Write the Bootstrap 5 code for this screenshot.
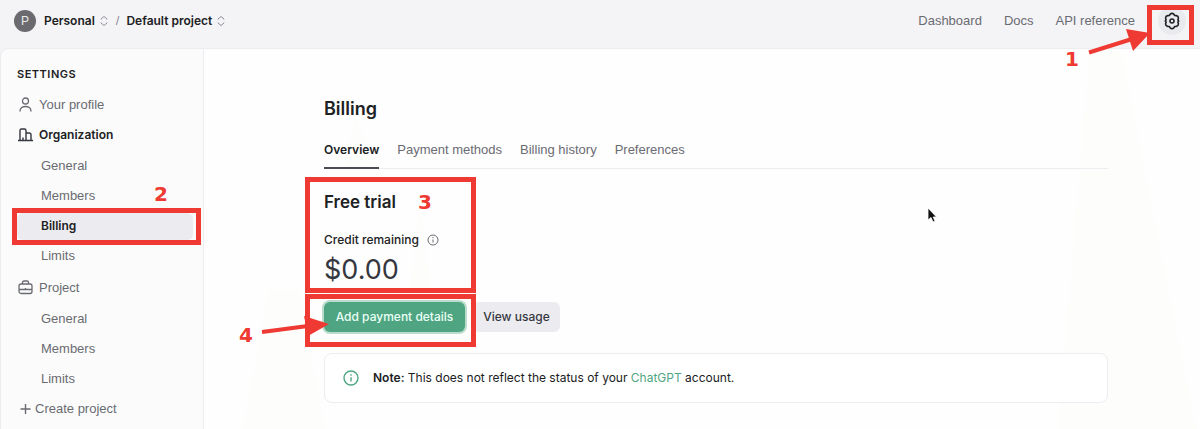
<!DOCTYPE html>
<html lang="en">
<head>
<meta charset="utf-8">
<meta name="viewport" content="width=device-width, initial-scale=1">
<title>Billing</title>
<link href="https://cdn.jsdelivr.net/npm/bootstrap@5.3.0/dist/css/bootstrap.min.css" rel="stylesheet">
<style>
:root { --ink:#202123; --muted:#6a6b72; --line:#ececf1; --mark-red:#ee3a32; --green:#4fa582; }
body { font:13px/20px "Liberation Sans", Arial, sans-serif; color:var(--ink); background:#f4f4f6; overflow-x:hidden; }
a { text-decoration:none; }
.strong-text { font-family:Inter, "Liberation Sans", sans-serif; font-size:12px; font-weight:600; }
.topbar { height:48px; padding:0 14px 6px; }
.avatar { width:22px; height:22px; background:#6b6b6f; color:#ececec; font-size:12px; }
.switcher { color:var(--ink); background:none; border:0; padding:0; }
.slash { margin:0 7px; color:#8e8ea0; }
.top-links { gap:22px; margin-right:23px; }
.top-links a, .side a, .tab-row a { color:var(--muted); }
.gear { width:28px; height:28px; border:0; padding:0; background:#e9eaee; }
.side { width:204px; flex:none; background:#fbfbfb; border:1px solid var(--line); border-bottom:0; border-radius:8px 0 0 0; padding:16px 10px 0 16px; }
.side h2 { font-size:11px; letter-spacing:.5px; line-height:18px; margin:0 0 7px; }
.side a { height:30px; }
.side ul { margin:1px 0 2px; }
.side ul:last-of-type { margin-bottom:0; }
.side ul a { padding-left:24px; }
.side .active { color:var(--ink); }
.side ul .active::before { content:""; position:absolute; inset:2px 0 1px; background:#ececf0; border-radius:6px; z-index:0; }
.panel { min-width:0; background:#fefefe; border-top:1px solid var(--line); padding:46px 92px 25px 120px; }
.panel h1 { font:600 18px/28px Inter, sans-serif; margin:0 0 16px; }
.tab-row { gap:18px; border-bottom:1px solid var(--line); }
.tab-row a { padding:1px 0 7px; margin-bottom:-1px; border-bottom:2px solid transparent; height:30px; }
.tab-row .active { color:var(--ink); border-color:#4a4b55; }
.trial h2 { font:600 17px/24px Inter, sans-serif; margin:0 0 16px; }
.trial { margin-top:21px; width:133px; }
.credit { font:500 12px/20px Inter, sans-serif; }
.amount { font:27px/34px Inter, sans-serif; color:#353740; margin-top:3px; }
.actions { margin-top:15px; }
.btn-pay, .btn-usage { font:500 12px/20px Inter, sans-serif; border:0; border-radius:6px; padding:5px 8px; height:30px; white-space:nowrap; }
.btn-pay { color:#eafff5; background:var(--green); box-shadow:0 0 0 2px #b9dccd; width:141px; }
.btn-usage { color:#353740; background:#ececf0; width:87px; }
.note { margin-top:21px; gap:14px; border:1px solid var(--line); border-radius:8px; padding:14px 18px; background:#fff; height:50px; }
.note-text { font:12px/20px Inter, sans-serif; }
.note a { color:var(--green); }
.outline { position:absolute; border:5px solid var(--mark-red); pointer-events:none; z-index:3; }
.step { position:absolute; font:700 20px/20px "DejaVu Sans", sans-serif; color:var(--mark-red); z-index:3; }
.overlay { position:absolute; overflow:visible; pointer-events:none; z-index:4; }
.shade { position:absolute; right:0; top:0; z-index:0; }
.o-gear { inset:-2px -8px -10px -11px; }
.o-nav { inset:-3px -8px -4px -5px; }
.o-trial { top:-13px; left:-19px; width:171px; height:116px; }
.o-pay { top:-8px; left:-19px; width:171px; height:53px; }
</style>
</head>
<body class="d-flex flex-column min-vh-100">
<header class="topbar d-flex align-items-center">
  <span class="avatar rounded-circle d-flex align-items-center justify-content-center me-2">P</span>
  <button class="switcher strong-text d-flex align-items-center gap-1" type="button">Personal
    <svg width="10" height="12" viewBox="0 0 10 12" fill="none" stroke="#8e8ea0"><path d="M2 4.500V4l3-2.500L8 4v.5M2 7.500V8l3 2.500L8 8v-.5"/></svg></button>
  <span class="slash">/</span>
  <button class="switcher strong-text d-flex align-items-center gap-1" type="button">Default project
    <svg width="10" height="12" viewBox="0 0 10 12" fill="none" stroke="#8e8ea0"><path d="M2 4.500V4l3-2.500L8 4v.5M2 7.500V8l3 2.500L8 8v-.5"/></svg></button>
  <nav class="top-links d-flex ms-auto"><a href="#">Dashboard</a><a href="#">Docs</a><a href="#">API reference</a></nav>
  <div class="position-relative">
    <button class="gear rounded-circle d-flex align-items-center justify-content-center" type="button" aria-label="Settings">
      <svg width="18" height="18" viewBox="0 0 18 18" fill="none" stroke="#202123" stroke-width="1.600" stroke-linejoin="round"><path d="M7.200 2.200Q9 .6 10.800 2.200L11.700 3.500 13.300 3.600Q15.600 4.100 15.400 6.300L14.900 7.800 15.700 9 14.900 10.200 15.400 11.700Q15.600 13.900 13.300 14.400L11.700 14.500 10.800 15.800Q9 17.400 7.200 15.800L6.300 14.500 4.700 14.400Q2.400 13.900 2.600 11.700L3.100 10.200 2.300 9 3.100 7.800 2.600 6.300Q2.400 4.100 4.700 3.600L6.300 3.500Z"/><circle cx="9" cy="9" r="2"/></svg></button>
    <span class="outline o-gear"></span>
    <span class="step" style="right:107px;top:42px">1</span>
    <svg class="overlay" style="right:36px;top:21px" width="62" height="30" viewBox="0 0 62 30"><path d="M1 24.500 44 11" stroke="#ee3a32" stroke-width="4"/><path d="M38 1 62 5 45 23Z" fill="#ee3a32"/></svg>
  </div>
</header>
<div class="d-flex flex-grow-1">
  <nav class="side" aria-label="Settings">
    <h2 class="strong-text">SETTINGS</h2>
    <a href="#" class="d-flex align-items-center gap-1"><svg width="18" height="18" viewBox="0 0 18 18" fill="none" stroke="#6a6b72" stroke-width="1.300" stroke-linecap="round"><circle cx="8.500" cy="5" r="3"/><path d="M3 15C3 9 14 9 14 15"/></svg>Your profile</a>
    <a href="#" class="active strong-text d-flex align-items-center gap-1"><svg width="18" height="18" viewBox="0 0 18 18" fill="none" stroke="#353740" stroke-width="1.400"><path d="M1 14.500H16M3 14.500V4.500Q3 3 4.500 3H7.500Q9 3 9 4.500V14.500M9 7H12Q14 7 14 9V14.500M6 14V11.500"/></svg>Organization</a>
    <ul class="list-unstyled">
      <li><a href="#" class="d-flex align-items-center">General</a></li>
      <li class="position-relative"><a href="#" class="d-flex align-items-center">Members</a><span class="step" style="right:25px;top:3px">2</span></li>
      <li class="position-relative"><a href="#" class="active strong-text d-flex align-items-center"><span class="position-relative z-1">Billing</span></a><span class="outline o-nav"></span></li>
      <li><a href="#" class="d-flex align-items-center">Limits</a></li>
    </ul>
    <a href="#" class="d-flex align-items-center gap-1"><svg width="18" height="18" viewBox="0 0 18 18" fill="none" stroke="#6a6b72" stroke-width="1.300"><rect x="2" y="5" width="13" height="9.500" rx="2"/><path d="M5.500 5V3.500Q5.500 2 7 2H10Q11.500 2 11.500 3.500V5M2 10.500H15M8.500 9V10.500"/></svg>Project</a>
    <ul class="list-unstyled">
      <li><a href="#" class="d-flex align-items-center">General</a></li>
      <li><a href="#" class="d-flex align-items-center">Members</a></li>
      <li><a href="#" class="d-flex align-items-center">Limits</a></li>
    </ul>
    <a href="#" class="d-flex align-items-center"><svg width="18" height="18" viewBox="0 0 18 18" stroke="#6a6b72" stroke-width="1.400"><path d="M3.500 9H13.500M8.500 4V14"/></svg>Create project</a>
  </nav>
  <main class="panel flex-grow-1 position-relative">
    <svg class="shade" width="996" height="380" viewBox="204 49 996 380" fill="#fdfdfb" aria-hidden="true"><path d="M1090 49H1121L1196 429H1058ZM354 115 378 168H345ZM419 195 430 288H411ZM268 290H300L325 429H243Z"/></svg>
    <div class="position-relative">
      <h1>Billing</h1>
      <nav class="tab-row d-flex"><a class="active strong-text" href="#">Overview</a><a href="#">Payment methods</a><a href="#">Billing history</a><a href="#">Preferences</a></nav>
      <section class="trial position-relative">
        <h2>Free trial</h2>
        <div class="d-flex align-items-center gap-2 text-nowrap"><span class="credit">Credit remaining</span><svg width="12" height="12" viewBox="0 0 12 12" fill="none" stroke="#6a6b72"><circle cx="6" cy="6" r="5"/><path d="M6 5.500V8.500M6 3V4.200"/></svg></div>
        <div class="amount">$0.00</div>
        <span class="outline o-trial"></span><span class="step" style="right:25px;top:2px">3</span>
      </section>
      <div class="actions position-relative d-flex">
        <button class="btn-pay me-2" type="button">Add payment details</button>
        <button class="btn-usage" type="button">View usage</button>
        <span class="outline o-pay"></span><span class="step" style="left:-85px;top:23px">4</span>
        <svg class="overlay" style="left:-63px;top:11px" width="68" height="24" viewBox="0 0 68 24"><path d="M1 19 47 13" stroke="#ee3a32" stroke-width="4"/><path d="M43 3 68 11 47 23Z" fill="#ee3a32"/></svg>
      </div>
      <div class="note d-flex align-items-center"><svg width="16" height="16" viewBox="0 0 16 16" fill="none" stroke="#4fa582" stroke-width="1.400"><circle cx="8" cy="8" r="7"/><path d="M8 7.200V11.500M8 4.300V5.800"/></svg><span class="note-text"><b class="strong-text">Note:</b> This does not reflect the status of your <a href="#">ChatGPT</a> account.</span></div>
      <svg class="overlay" style="right:171px;top:112px" width="10" height="16" viewBox="0 0 10 16"><path d="M1 1V13L4 10.500 6 15 8 14 6.200 10H9.500Z" fill="#111" stroke="#fff" stroke-width=".8"/></svg>
    </div>
  </main>
</div>
<script src="https://cdn.jsdelivr.net/npm/bootstrap@5.3.0/dist/js/bootstrap.bundle.min.js"></script>
</body>
</html>
